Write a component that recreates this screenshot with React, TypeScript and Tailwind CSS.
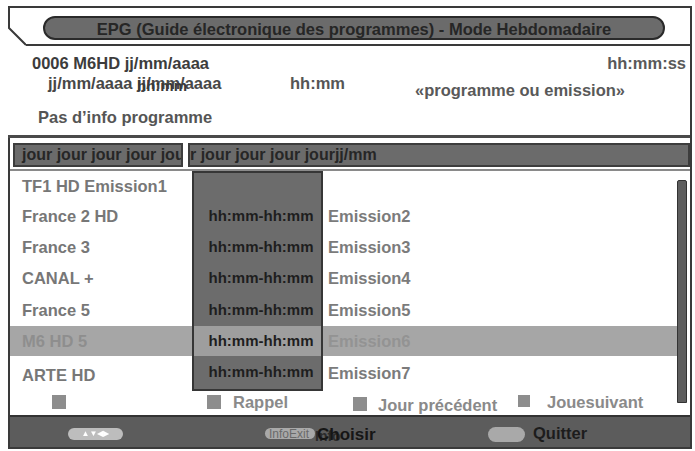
import React from "react";

type Row = {
  channel: string;
  time: string;
  show: string;
  h: string;
  selected?: boolean;
  first?: boolean;
  last?: boolean;
};

const rows: Row[] = [
  { channel: "TF1 HD Emission1", time: "", show: "", h: "h-[30px]", first: true },
  { channel: "France 2 HD", time: "hh:mm-hh:mm", show: "Emission2", h: "h-[31px]" },
  { channel: "France 3", time: "hh:mm-hh:mm", show: "Emission3", h: "h-[31px]" },
  { channel: "CANAL +", time: "hh:mm-hh:mm", show: "Emission4", h: "h-[31px]" },
  { channel: "France 5", time: "hh:mm-hh:mm", show: "Emission5", h: "h-[32px]" },
  { channel: "M6 HD 5", time: "hh:mm-hh:mm", show: "Emission6", h: "h-[30px]", selected: true },
  { channel: "ARTE HD", time: "hh:mm-hh:mm", show: "Emission7", h: "h-[35px]", last: true },
];

function Header() {
  return (
    <div className="flex h-[38px]">
      <svg width="18" height="38" className="shrink-0">
        <polyline points="1,0 1,20 18,37" fill="none" stroke="#3a3a3a" strokeWidth="2" />
      </svg>
      <div className="flex-1 border-b-2 border-[#3a3a3a]">
        <div className="ml-[17px] mt-[8px] flex h-[24px] w-[622px] items-center justify-center rounded-full border-2 border-[#2a2a2a] bg-[#6b6b6b] pt-[2px]">
          <span className="text-[16.5px] font-bold leading-none text-[#262626]">
            EPG (Guide électronique des programmes) - Mode Hebdomadaire
          </span>
        </div>
      </div>
    </div>
  );
}

function InfoPanel() {
  return (
    <div className="flex h-[92px] flex-col border-b-[3px] border-[#4a4a4a] text-[16.5px] font-bold leading-[18px]">
      <div className="mt-[8px] flex justify-between pl-[24px] pr-[4px]">
        <span className="text-[#3c3c3c]">0006 M6HD jj/mm/aaaa</span>
        <span className="text-[#595959]">hh:mm:ss</span>
      </div>
      <div className="mt-[2px] flex items-start">
        <span className="relative ml-[40px] w-[242px] text-[#474747]">
          jj/mm/aaaa jj/mm/aaaa
          <span className="absolute left-[89px] top-[3px] text-[15px] text-[#3a3a3a]">hh:mm</span>
        </span>
        <span className="w-[125px] text-[#555]">hh:mm</span>
        <span className="mt-[7px] text-[#595959]">«programme ou emission»</span>
      </div>
      <div className="mt-[9px] pl-[30px] text-[#555]">Pas d’info programme</div>
    </div>
  );
}

function DayBar() {
  return (
    <div className="h-[33px] border-b-2 border-[#8a8a8a] pt-[5px]">
      <div className="flex h-[24px] text-[16px] font-bold leading-[20px] text-[#262626]">
        <div className="ml-[3px] w-[170px] overflow-hidden whitespace-nowrap border-2 border-[#3d3d3d] bg-[#6b6b6b] pl-[7px]">
          jour jour jour jour jou
        </div>
        <div className="ml-[5px] flex-1 overflow-hidden whitespace-nowrap border-2 border-[#3d3d3d] bg-[#6b6b6b]">
          r jour jour jour jourjj/mm
        </div>
      </div>
    </div>
  );
}

function Legend() {
  return (
    <div className="flex h-[24px] items-start pl-[42px] text-[16.5px] font-bold leading-[18px] text-[#8a8a8a]">
      <div className="w-[155px]">
        <div className="mt-[4px] h-[14px] w-[14px] bg-[#8d8d8d]" />
      </div>
      <div className="flex w-[146px] items-start">
        <div className="mt-[4px] h-[14px] w-[14px] bg-[#8d8d8d]" />
        <span className="ml-[12px] mt-[2px]">Rappel</span>
      </div>
      <div className="flex w-[165px] items-start">
        <div className="mt-[6px] h-[14px] w-[14px] bg-[#8d8d8d]" />
        <span className="ml-[11px] mt-[5px]">Jour précédent</span>
      </div>
      <div className="flex items-start">
        <div className="mt-[4px] h-[12px] w-[12px] bg-[#8d8d8d]" />
        <span className="ml-[17px] mt-[2px]">Jouesuivant</span>
      </div>
    </div>
  );
}

function ProgramList() {
  return (
    <div className="flex h-[244px]">
      <div className="w-[667px]">
        {rows.map((r) => (
          <div key={r.channel} className={`flex ${r.h} text-[16.5px] font-bold`}>
            <div
              className={`flex w-[182px] items-center pl-[12px] ${
                r.selected ? "bg-[#a6a6a6] text-[#8e8e8e]" : "text-[#777]"
              } ${r.last ? "pt-[4px]" : ""}`}
            >
              {r.channel}
            </div>
            <div
              className={`flex w-[131px] items-center justify-center border-x-2 border-[#363636] pl-[7px] text-[15px] text-[#1e1e1e] ${
                r.selected ? "bg-[#9e9e9e]" : "bg-[#6c6c6c]"
              } ${r.first ? "border-t-2" : ""} ${r.last ? "border-b-2" : ""}`}
            >
              {r.time}
            </div>
            <div
              className={`flex flex-1 items-center pl-[5px] ${
                r.selected ? "bg-[#a6a6a6] text-[#939393]" : "text-[#7b7b7b]"
              }`}
            >
              {r.show}
            </div>
          </div>
        ))}
        <Legend />
      </div>
      <div className="mt-[9px] h-[223px] w-[10px] rounded-t-[2px] border border-[#333] bg-[#5e5e5e]" />
    </div>
  );
}

function BottomBar() {
  return (
    <div className="flex h-[32px] items-start border-t-2 border-[#333] bg-[#5c5c5c]">
      <div className="ml-[58px] mt-[11px] flex h-[12px] w-[55px] items-center justify-center rounded-full bg-[#bdbdbd] text-[8px] leading-none text-white blur-[0.6px]">
        ▲▼◀▶
      </div>
      <div className="ml-[142px] mt-[11px] flex h-[11px] w-[50px] items-center rounded-full bg-[#a9a9a9] pl-[4px] text-[12px] leading-none text-[#6a6a6a]">
        InfoExit
      </div>
      <div className="relative ml-[2px] mt-[6px] w-[171px]">
        <span className="absolute left-[-2px] top-[6px] text-[14px] font-bold leading-none text-[#2b2b2b]">
          Info
        </span>
        <span className="relative text-[17px] font-bold leading-[19px] text-[#161616]">Choisir</span>
      </div>
      <div className="mt-[10px] h-[15px] w-[37px] rounded-full bg-[#a9a9a9] blur-[0.5px]" />
      <span className="ml-[8px] mt-[7px] text-[16.5px] font-bold leading-[18px] text-[#1c1c1c]">Quitter</span>
    </div>
  );
}

export default function App() {
  return (
    <div className="h-[451px] w-[695px] bg-white pl-[8px] pt-[6px] font-['Liberation_Sans',Arial,sans-serif]">
      <div className="w-[684px] border-r-2 border-t-2 border-[#3a3a3a]">
        <Header />
        <InfoPanel />
        <div className="border-b-2 border-l-2 border-[#3a3a3a]">
          <DayBar />
          <ProgramList />
          <BottomBar />
        </div>
      </div>
    </div>
  );
}
